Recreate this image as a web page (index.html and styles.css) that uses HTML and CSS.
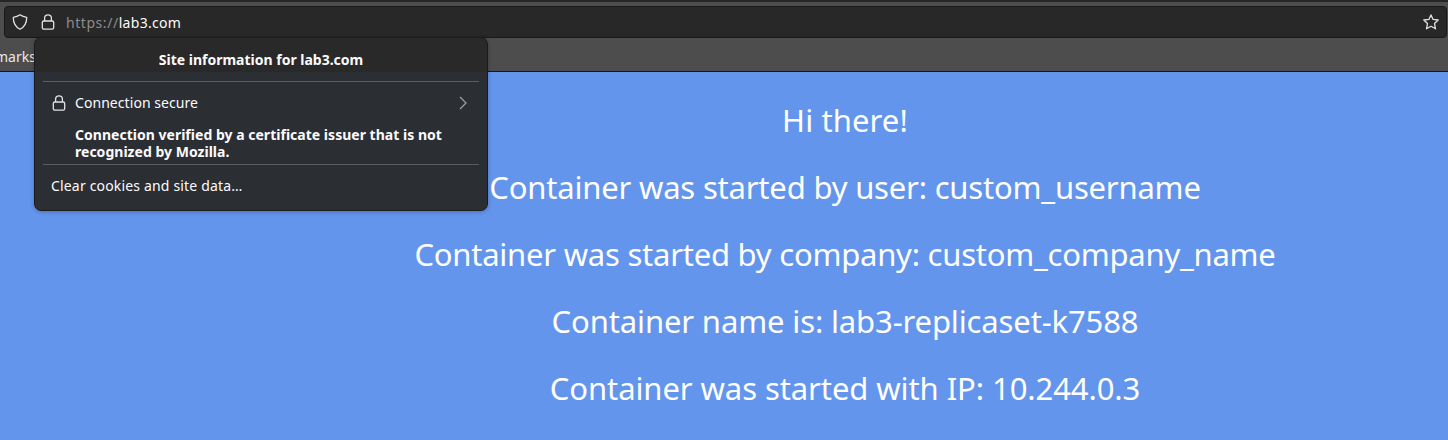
FILE: index.html
```html
<!DOCTYPE html>
<html lang="en">
<head>
<meta charset="utf-8">
<title>lab3.com</title>
<link rel="stylesheet" href="styles.css">
</head>
<body>
<header class="chrome">
  <div class="urlbar">
    <svg class="icon shield" viewBox="0 0 16 16"><path d="M8 .8C6.400 2 4.200 3 1.300 3.300C1.200 8.500 3 12.600 8 15.300C13 12.600 14.800 8.500 14.700 3.300C11.800 3 9.600 2 8 .8Z"/></svg>
    <svg class="icon lock" viewBox="0 0 16 16"><rect x="2.300" y="7" width="11.400" height="8.200" rx="1.600"/><path d="M4.600 7V4.200a3.400 3.400 0 0 1 6.800 0V7"/></svg>
    <span class="url"><span class="scheme">https://</span><span class="host">lab3.com</span></span>
    <svg class="icon star" viewBox="0 0 16 16"><path d="M8 .9L10.100 5.400L15.200 6L11.500 9.500L12.500 14.800L8 12.300L3.500 14.800L4.500 9.500L.8 6L5.900 5.400Z"/></svg>
  </div>
  <div class="bookmarks"><span class="bookmark">marks</span></div>
</header>
<main class="page">
  <p class="line hi">Hi there!</p>
  <p class="line user">Container was started by user: custom_username</p>
  <p class="line company">Container was started by company: custom_company_name</p>
  <p class="line name">Container name is: lab3-replicaset-k7588</p>
  <p class="line ip">Container was started with IP: 10.244.0.3</p>
</main>
<section class="popup">
  <h1 class="title"><span>Site information for lab3.com</span></h1>
  <div class="connection">
    <svg class="icon lock" viewBox="0 0 16 16"><rect x="2.300" y="7" width="11.400" height="8.200" rx="1.600"/><path d="M4.600 7V4.200a3.400 3.400 0 0 1 6.800 0V7"/></svg>
    <span class="secure">Connection secure</span>
    <svg class="chevron" viewBox="0 0 8 14"><path d="M1 1l6 6l-6 6"/></svg>
  </div>
  <p class="issuer"><span class="first">Connection verified by a certificate issuer that is not</span><br><span class="second">recognized by Mozilla.</span></p>
  <div class="clear"><span>Clear cookies and site data…</span></div>
</section>
</body>
</html>
```

FILE: styles.css
```css
* { box-sizing: border-box; }
body {
  margin: 0;
  height: 440px;
  overflow: hidden;
  background: #6495ed;
  font-family: "Noto Sans", "Open Sans", sans-serif;
  font-size: 14px;
  color: #fbfbfe;
}
.chrome {
  height: 72px;
  padding: 4px 1px 0 4px;
  background: #4d4d4d;
  border-top: 2px solid #252525;
  border-bottom: 1px solid #181818;
}
.urlbar {
  display: flex;
  align-items: center;
  height: 32px;
  padding: 0 7px;
  background: #282828;
  border: 1px solid #191919;
  border-radius: 4px;
}
.icon {
  flex: none;
  width: 16px;
  height: 16px;
  fill: none;
  stroke: #e2e2e2;
  stroke-width: 1.3;
  stroke-linejoin: round;
}
.urlbar .lock { margin-left: 12px; }
.url { margin-left: 10px; padding-top: 2px; line-height: 20px; white-space: nowrap; }
.scheme { color: #8c8c8c; letter-spacing: .55px; }
.host { letter-spacing: .3px; }
.star { margin-left: auto; }
.bookmarks { display: flex; height: 33px; margin-left: -9px; padding-top: 9px; }
.bookmark { line-height: 20px; color: #e8e8e8; }
.page { padding: 15px 0 0 242px; text-align: center; color: #fff; }
.line { margin: 0; font-size: 31px; line-height: 67px; white-space: nowrap; }
.hi { letter-spacing: .1px; }
.user { letter-spacing: -.19px; }
.company { letter-spacing: -.23px; }
.name { letter-spacing: -.13px; }
.ip { letter-spacing: -.08px; }
.popup {
  position: absolute;
  left: 34px;
  top: 37px;
  width: 454px;
  height: 174px;
  padding: 0 8px;
  border: 1px solid #191b1d;
  border-radius: 7px;
  background: linear-gradient(#292929 34px, #2b2e33 34px);
  box-shadow: 0 1px 4px rgba(0, 0, 0, .25);
}
.title {
  height: 44px;
  margin: 0;
  border-bottom: 1px solid #5b5d61;
  font-size: 14px;
  font-weight: 700;
  line-height: 43px;
  text-align: center;
}
.connection { display: flex; align-items: center; height: 42px; padding: 0 12px 0 8px; }
.secure { margin-left: 8px; padding-bottom: 2px; letter-spacing: .06px; }
.chevron {
  width: 8px;
  height: 14px;
  margin-left: auto;
  fill: none;
  stroke: #a0a1a3;
  stroke-width: 1.2;
}
.issuer {
  height: 41px;
  margin: 0;
  padding: 2px 0 0 32px;
  border-bottom: 1px solid #5b5d61;
  font-weight: 700;
  line-height: 17px;
  letter-spacing: .02px;
  white-space: nowrap;
}
.clear { padding-left: 8px; line-height: 42px; letter-spacing: .17px; }
```
